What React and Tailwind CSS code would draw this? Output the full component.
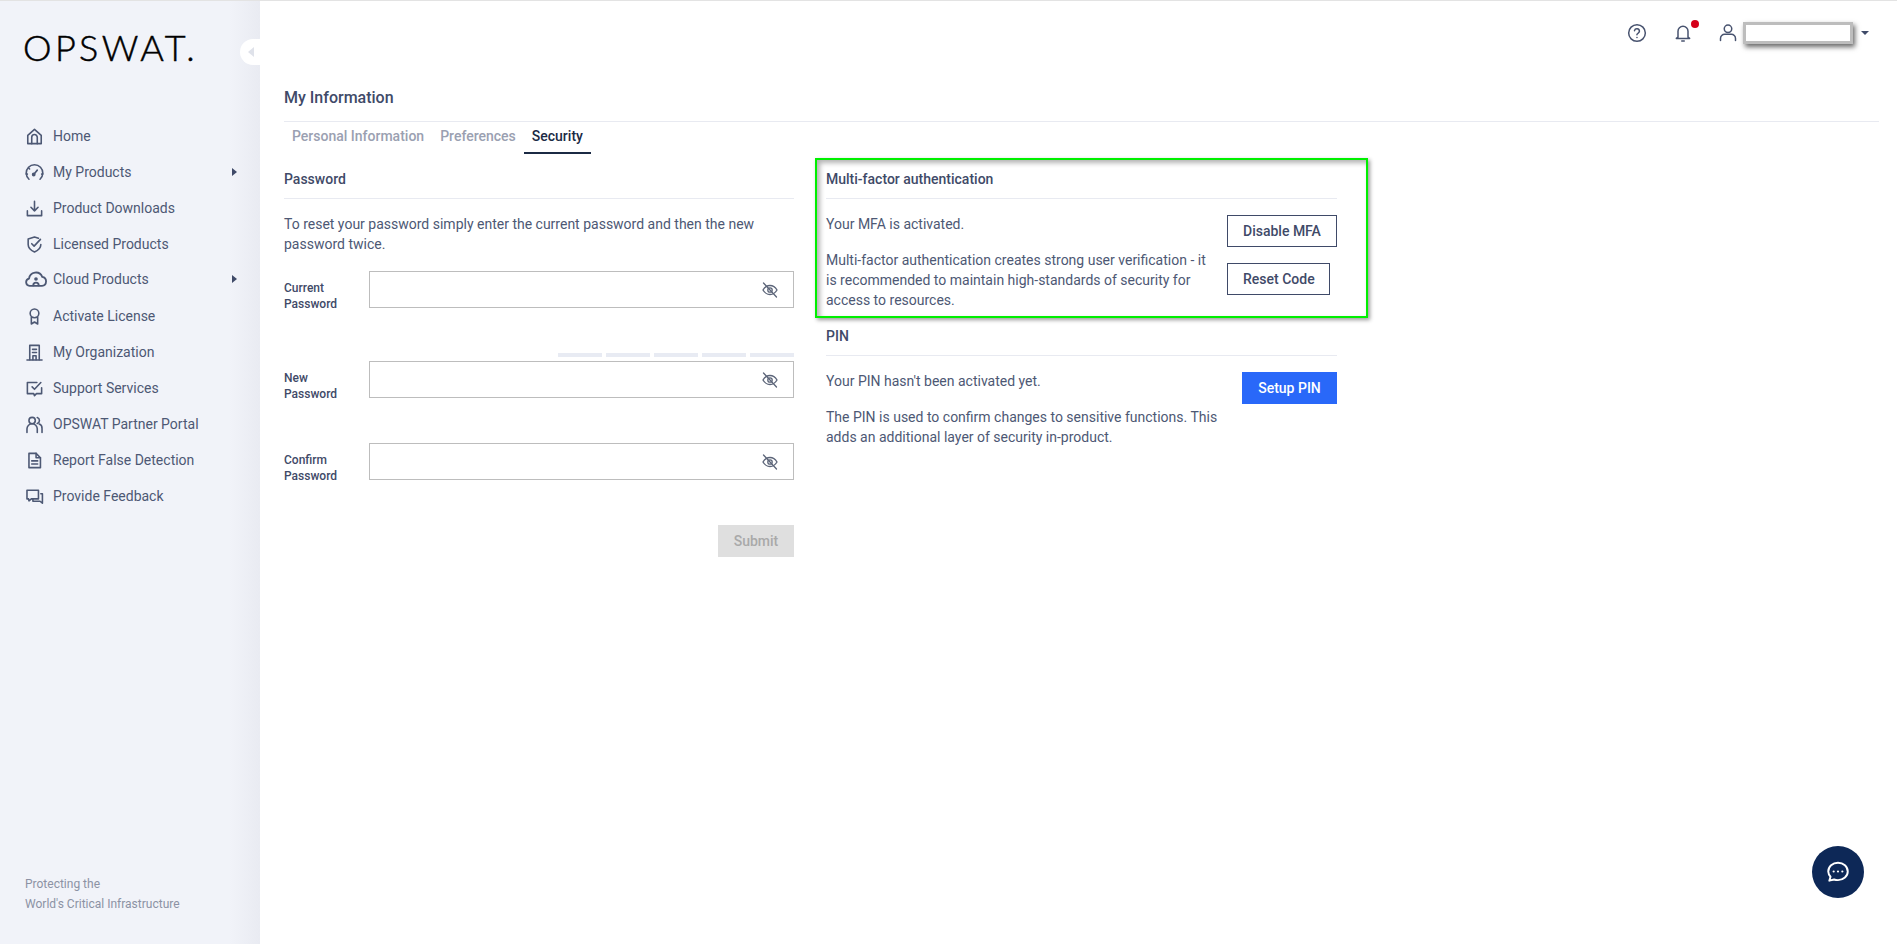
import React from "react";

const S = ({ children, className = "w-5 h-5", sw = 2 }) => (
  <svg viewBox="0 0 24 24" fill="none" stroke="currentColor" strokeWidth={sw} strokeLinecap="round" strokeLinejoin="round" className={className}>
    {children}
  </svg>
);

const navIcons = {
  home: <><path d="M3.500 10.500 12 3l8.500 7.500V21h-17Z" /><path d="M8.500 21v-8a3.500 3.500 0 0 1 7 0v8" /></>,
  gauge: <><path d="M5 20.500a10.500 10.500 0 1 1 14 0" /><path d="M1.500 14h1.500M21 14h1.500M4.800 6.500l1 1" /><path d="M11 14.500 15.500 9" /><circle cx="11" cy="14.500" r="1.400" fill="currentColor" /></>,
  download: <><path d="M12 3v12M7.500 10.500 12 15l4.500-4.500" /><path d="M3 15v6h18v-6" /></>,
  shield: <><path d="M20 12c0 5-3.500 7.500-8 9.500C7.500 19.500 4 17 4 12V5l8-2.500 5 1.500" /><path d="m8.500 11 3 3 8-8.500" /></>,
  cloud: <><path d="M6.500 19.500H5a4 4 0 0 1-.6-7.900A7.500 7.500 0 0 1 18.800 9.600a5 5 0 0 1-.3 9.900Z" /><path d="M9 19a3 3 0 0 1 6 0" /><circle cx="12" cy="12" r="1" /></>,
  award: <><circle cx="12" cy="8" r="5.500" /><path d="M8 13v8.500l4-2.500 4 2.500V13" /></>,
  org: <><path d="M6 21V3h12v18" /><path d="M2.500 21.500h19" /><path d="M9.500 8h5M9.500 12h5M10 21v-5h4v5" /></>,
  support: <><path d="M21 11v7.500h-6.500L12 21l-1-2.500H3v-14h12" /><path d="m9 10 3 3 8-8.500" /></>,
  partner: <><circle cx="9" cy="7" r="4" /><path d="M2.500 22v-4.500a6.500 6.500 0 0 1 13 0V22" /><path d="M15.500 3.200a4 4 0 0 1 0 7.600" /><path d="M18 11.500a5.500 5.500 0 0 1 3.500 5.500v5" /></>,
  report: <><path d="M5 3h9l5.500 5.500V21H5Z" /><path d="M14 3v5.500h5.500" /><path d="M8.500 12.500h7.500M8.500 16.500h7.500" /></>,
  feedback: <><path d="M2.500 4h14.500v11H8l-3 2.500-.5-2.500h-2Z" /><path d="M20 8.500h2v12l-3-2.500h-9v-3" /></>,
};

const nav = [
  ["Home", "home"],
  ["My Products", "gauge", true],
  ["Product Downloads", "download"],
  ["Licensed Products", "shield"],
  ["Cloud Products", "cloud", true],
  ["Activate License", "award"],
  ["My Organization", "org"],
  ["Support Services", "support"],
  ["OPSWAT Partner Portal", "partner"],
  ["Report False Detection", "report"],
  ["Provide Feedback", "feedback"],
];

const EyeOff = () => (
  <svg viewBox="0 0 16 16" fill="none" stroke="#5b6478" strokeWidth="1.300" strokeLinecap="round" className="w-4 h-4">
    <path d="M1 8s2.600-4.500 7-4.500S15 8 15 8s-2.600 4.500-7 4.500S1 8 1 8Z" />
    <circle cx="8" cy="8" r="2.200" />
    <path d="M1.500 1 14.500 15" />
  </svg>
);

const Field = ({ a, b }) => (
  <div className="flex h-[37px]">
    <div className="w-[85px] pt-[9px] text-[12px] leading-[16px] font-medium text-[#3f4a68]">
      {a}
      <br />
      {b}
    </div>
    <div className="flex-1 h-[37px] border border-[#bdbdbd] flex items-center justify-end pr-[15px]">
      <EyeOff />
    </div>
  </div>
);

const Heading = ({ children }) => (
  <div className="pb-[9px] border-b border-[#e8eaf1] text-[14px] leading-[20px] font-medium text-[#3f4a68]">{children}</div>
);

export default function App() {
  return (
    <div className="relative h-[944px] w-full flex overflow-hidden bg-white border-t border-[#e3e3e3] text-[14px] leading-[20px] text-[#4d5874] font-['Roboto',sans-serif]">
      <aside className="relative w-[260px] shrink-0 flex flex-col bg-[linear-gradient(to_right,#f1f3f9_88%,#e9ebf2)]">
        <div className="pl-[23px] pt-[24px] h-[117px] text-[36px] leading-[44px] tracking-[3.400px] text-black font-['Lato',sans-serif] font-light [-webkit-text-stroke:0.5px_black]">
          OPSWAT.
        </div>
        <div className="absolute right-0 top-[38px] w-[20px] h-[26px] bg-white rounded-l-[13px] flex items-center justify-center">
          <div className="w-0 h-0 ml-[2px] border-y-[5px] border-y-transparent border-r-[6px] border-r-[#dfe2ea]" />
        </div>
        <nav className="flex flex-col">
          {nav.map(([t, ic, caret]) => (
            <div key={t} className={ic === "cloud" ? "relative h-[36px] flex items-center pl-[25px] -translate-y-[1px]" : "relative h-[36px] flex items-center pl-[25px]"}>
              <div className="w-[28px] shrink-0">
                <S className={ic === "cloud" ? "w-[22px] h-[22px]" : "w-[19px] h-[19px]"}>{navIcons[ic]}</S>
              </div>
              <span>{t}</span>
              {caret && (
                <div className="absolute left-[232px] w-0 h-0 border-y-[4px] border-y-transparent border-l-[5px] border-l-[#3f4a68]" />
              )}
            </div>
          ))}
        </nav>
        <div className="mt-auto pl-[25px] pb-[30px] text-[12px] leading-[20px] text-[#8c92a4]">
          Protecting the
          <br />
          World's Critical Infrastructure
        </div>
      </aside>

      <main className="flex-1 pl-[24px] pr-[18px] flex flex-col">
        <div className="h-[64px] shrink-0 flex items-center justify-end text-[#48536f] pr-[10px]">
          <S className="w-[20px] h-[20px] mr-[26px]" sw={1.800}>
            <circle cx="12" cy="12" r="10" />
            <path d="M9 9.200a3 3 0 0 1 5.900.8c0 2-3 2.500-3 4.200" />
            <path d="M11.900 17.500h.1" />
          </S>
          <div className="relative mr-[25px]">
            <S className="w-[20px] h-[20px]" sw={1.800}>
              <path d="M6 17V10a6 6 0 0 1 12 0v7l2 1.500H4Z" />
              <path d="M10.500 21.500h3" />
            </S>
            <div className="absolute -top-[3px] left-[18px] w-[8px] h-[8px] rounded-full bg-[#d5001a]" />
          </div>
          <S className="w-[20px] h-[20px] mr-[5px]" sw={1.800}>
            <circle cx="12" cy="7" r="4.500" />
            <path d="M3 21v-2.500a5 5 0 0 1 5-5h8a5 5 0 0 1 5 5V21" />
          </S>
          <div className="w-[110px] h-[22px] bg-white border-[3px] border-[#bdbdbd] shadow-[2px_3px_5px_rgba(0,0,0,0.6)] mr-[8px]" />
          <div className="w-0 h-0 border-x-[4px] border-x-transparent border-t-[4px] border-t-[#3f4a68]" />
        </div>

        <div className="mt-[21px] pb-[11px] border-b border-[#e8eaf1] text-[16px] leading-[24px] font-medium text-[#3f4a68]">My Information</div>

        <div className="flex h-[32px] font-medium text-[#9aa0b1]">
          <div className="px-[8px] pt-[4px]">Personal Information</div>
          <div className="px-[8px] pt-[4px]">Preferences</div>
          <div className="px-[8px] pt-[4px] text-[#1b2a44] border-b-2 border-[#1b2a44]">Security</div>
        </div>

        <div className="flex pt-[15px] gap-[32px]">
          <section className="w-[510px]">
            <Heading>Password</Heading>
            <p className="mt-[15px]">To reset your password simply enter the current password and then the new password twice.</p>
            <div className="mt-[17px]">
              <Field a="Current" b="Password" />
            </div>
            <div className="mt-[45px] flex justify-end gap-[4px]">
              {[0, 1, 2, 3, 4].map((i) => (
                <div key={i} className="w-[44px] h-[4px] bg-[#e8ebf3]" />
              ))}
            </div>
            <div className="mt-[4px]">
              <Field a="New" b="Password" />
            </div>
            <div className="mt-[45px]">
              <Field a="Confirm" b="Password" />
            </div>
            <div className="mt-[45px] flex justify-end">
              <div className="w-[76px] h-[32px] bg-[#dfdfdf] text-[#a9a9a9] font-medium flex items-center justify-center">Submit</div>
            </div>
          </section>

          <section className="w-[511px]">
            <Heading>Multi-factor authentication</Heading>
            <div className="flex justify-between pt-[15px]">
              <div className="w-[393px]">
                <p>Your MFA is activated.</p>
                <p className="mt-[16px]">Multi-factor authentication creates strong user verification - it is recommended to maintain high-standards of security for access to resources.</p>
              </div>
              <div className="w-[110px] pt-[1px] flex flex-col items-start gap-[16px] font-medium text-[#3f4a68] shrink-0">
                <div className="h-[32px] px-[15px] border border-[#3f4a68] flex items-center whitespace-nowrap">Disable MFA</div>
                <div className="h-[32px] pl-[15px] pr-[14px] border border-[#3f4a68] flex items-center whitespace-nowrap">Reset Code</div>
              </div>
            </div>
            <div className="mt-[16px]">
              <Heading>PIN</Heading>
            </div>
            <div className="flex justify-between pt-[15px]">
              <div className="w-[393px]">
                <p>Your PIN hasn't been activated yet.</p>
                <p className="mt-[16px]">The PIN is used to confirm changes to sensitive functions. This adds an additional layer of security in-product.</p>
              </div>
              <div className="pt-[1px]">
                <div className="h-[32px] w-[95px] bg-[#2968f9] text-white font-medium flex items-center justify-center">Setup PIN</div>
              </div>
            </div>
          </section>
        </div>
      </main>

      <div className="absolute left-[815px] top-[157px] w-[553px] h-[160px] border-[2px] border-[#00f000] shadow-[2px_2px_4px_rgba(0,0,0,0.4),inset_3px_3px_5px_rgba(0,0,0,0.3)]" />

      <div className="absolute left-[1812px] top-[845px] w-[52px] h-[52px] rounded-full bg-[#0d2857] flex items-center justify-center">
        <svg viewBox="0 0 24 24" fill="none" stroke="white" strokeWidth="1.800" className="w-[26px] h-[26px]">
          <path d="M12 3.500c5 0 9 3.600 9 8s-4 8-9 8c-1.300 0-2.500-.2-3.600-.6L4 20l1.100-3.600A7.700 7.700 0 0 1 3 11.500c0-4.400 4-8 9-8Z" strokeLinejoin="round" />
          <circle cx="8" cy="11.500" r="1" fill="white" stroke="none" />
          <circle cx="12" cy="11.500" r="1" fill="white" stroke="none" />
          <circle cx="16" cy="11.500" r="1" fill="white" stroke="none" />
        </svg>
      </div>
    </div>
  );
}
